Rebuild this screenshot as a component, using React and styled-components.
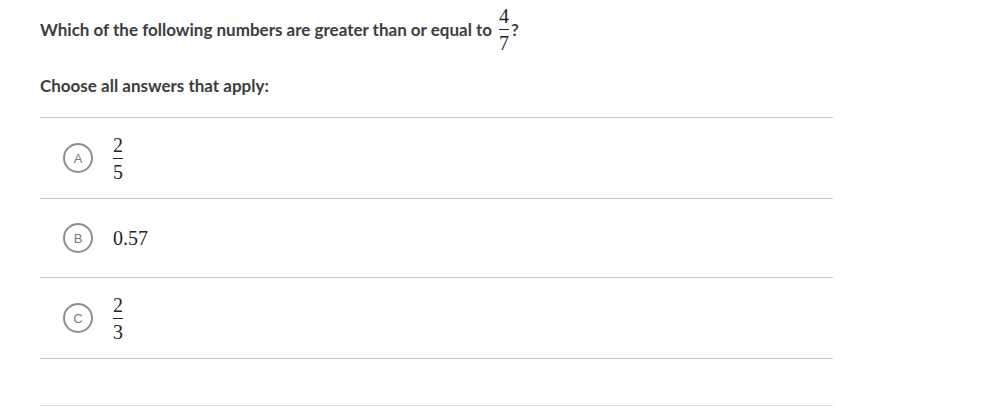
import styled, { createGlobalStyle } from "styled-components";

const GlobalStyle = createGlobalStyle`
  html, body {
    margin: 0;
    padding: 0;
    background: #fff;
  }
  body {
    font-family: Lato, "Noto Sans", sans-serif;
    color: #3b3d40;
  }
`;

/* ================= styles ================= */

const Page = styled.div`
  width: 793px;
  padding: 6px 0 0 40px;
`;

const Question = styled.div`
  display: flex;
  align-items: center;
  font-size: 17px;
  font-weight: 700;
  line-height: 20px;
`;

const Frac = styled.span`
  display: inline-flex;
  flex-direction: column;
  align-items: center;
  margin: ${(p) => p.$margin || "0"};
  font-family: "Liberation Serif", "DejaVu Serif", serif;
  font-weight: 400;
  font-size: 20px;
  line-height: 20px;
  color: #21242c;
`;

const FracBar = styled.span`
  display: block;
  align-self: stretch;
  height: 1px;
  background: #21242c;
  margin: 3px 0;
`;

const Hint = styled.div`
  margin-top: 23px;
  font-size: 17px;
  font-weight: 700;
  line-height: 20px;
`;

const Choices = styled.ul`
  list-style: none;
  margin: 21px 0 0;
  padding: 0;
`;

const Choice = styled.li`
  display: flex;
  align-items: center;
  gap: 20px;
  min-height: ${(p) => p.$min || "48px"};
  padding: 16px 0 16px 23px;
  border-top: 1px solid #c6c6c6;
  box-sizing: content-box;
`;

const EmptyChoice = styled.li`
  height: 46px;
  border-top: 1px solid #c6c6c6;
  border-bottom: 1px solid #dedede;
`;

const Letter = styled.span`
  width: 30px;
  height: 30px;
  box-sizing: border-box;
  border: 2px solid #8d8d8d;
  border-radius: 50%;
  display: grid;
  place-items: center;
  font-family: "Liberation Sans", Arial, sans-serif;
  font-size: 13px;
  color: #7a7a7a;
  flex-shrink: 0;
`;

const Num = styled.span`
  font-family: "Liberation Serif", "DejaVu Serif", serif;
  font-size: 20px;
  color: #21242c;
`;

const Fraction = ({ n, d, margin }) => (
  <Frac $margin={margin}>
    <span>{n}</span>
    <FracBar />
    <span>{d}</span>
  </Frac>
);

const App = () => {
  return (
    <>
      <GlobalStyle />
      <Page>
        <Question>
          <span>Which of the following numbers are greater than or equal to</span>
          <Fraction n="4" d="7" margin="0 2px 0 7px" />
          <span>?</span>
        </Question>

        <Hint>Choose all answers that apply:</Hint>

        <Choices>
          <Choice>
            <Letter>A</Letter>
            <Fraction n="2" d="5" />
          </Choice>
          <Choice $min="46px">
            <Letter>B</Letter>
            <Num>0.57</Num>
          </Choice>
          <Choice>
            <Letter>C</Letter>
            <Fraction n="2" d="3" />
          </Choice>
          <EmptyChoice />
        </Choices>
      </Page>
    </>
  );
};

export default App;
